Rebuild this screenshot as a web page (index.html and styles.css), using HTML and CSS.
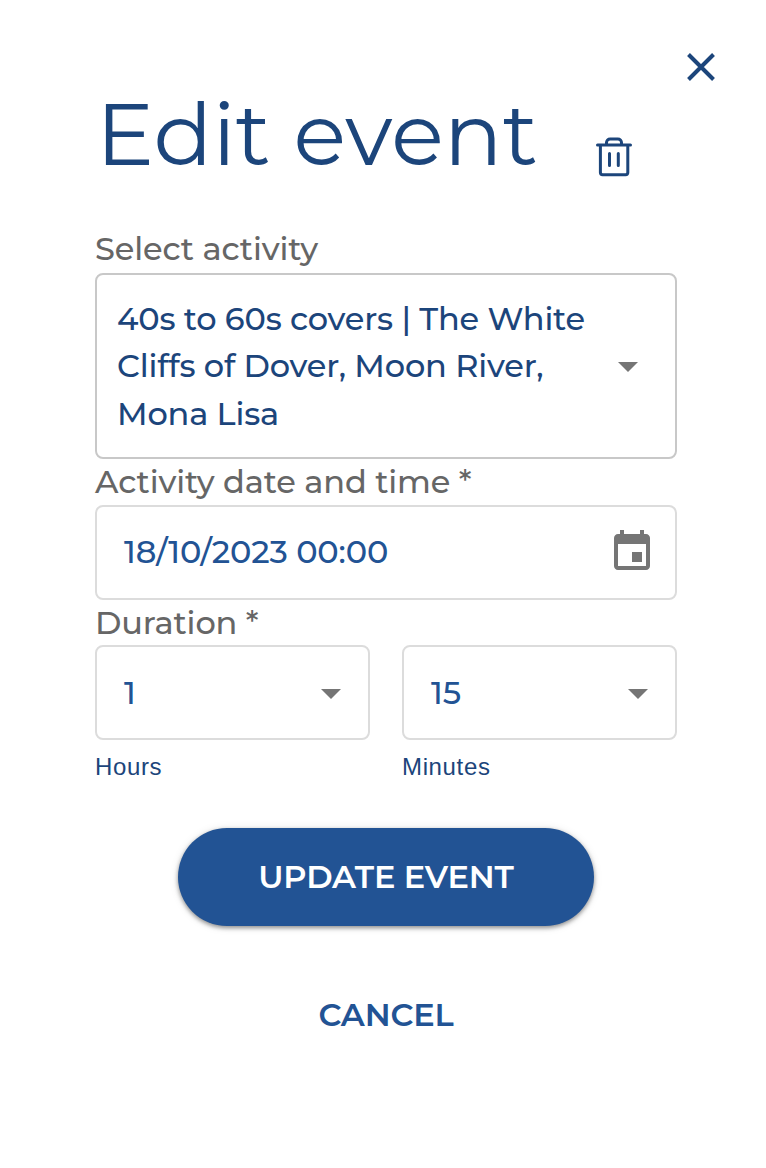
FILE: index.html
```html
<!DOCTYPE html>
<html lang="en">
<head>
<meta charset="utf-8">
<title>Edit event</title>
<link rel="stylesheet" href="styles.css">
</head>
<body>
<main class="dialog">
  <div class="topbar">
    <svg class="close" viewBox="0 0 28 28" role="img" aria-label="Close"><path d="M1.5 1.5l25 25M26.5 1.5l-25 25"/></svg>
  </div>
  <header class="heading">
    <h1 class="title">Edit event</h1>
    <svg class="trash" viewBox="0 0 36 40" role="img" aria-label="Delete"><path d="M1.5 8h33M4.400 8v27.600a2.200 2.200 0 0 0 2.200 2.200h23a2.200 2.200 0 0 0 2.200-2.200V8M10.500 7.500V5.600a3.600 3.600 0 0 1 3.600-3.600h7.800a3.600 3.600 0 0 1 3.600 3.600V7.500M13.500 16.500v12M22.300 16.500v12"/></svg>
  </header>
  <div class="label">Select activity</div>
  <div class="field activity">
    <div class="lines">40s to 60s covers | The White<br>Cliffs of Dover, Moon River,<br>Mona Lisa</div>
    <svg class="caret" viewBox="0 0 20 10"><path d="M0 0h20L10 10z"/></svg>
  </div>
  <div class="label">Activity date and time *</div>
  <div class="field date">
    <span class="value">18/10/2023 00:00</span>
    <svg class="calendar" viewBox="3 1 18 20"><path d="M17 12h-5v5h5v-5zM16 1v2H8V1H6v2H5c-1.110 0-1.990.9-1.990 2L3 19c0 1.100.89 2 2 2h14c1.100 0 2-.9 2-2V5c0-1.100-.9-2-2-2h-1V1h-2zm3 18H5V8h14v11z"/></svg>
  </div>
  <div class="label">Duration *</div>
  <div class="duration">
    <div class="part">
      <div class="field"><span class="value">1</span><svg class="caret" viewBox="0 0 20 10"><path d="M0 0h20L10 10z"/></svg></div>
      <div class="hint">Hours</div>
    </div>
    <div class="part">
      <div class="field"><span class="value">15</span><svg class="caret" viewBox="0 0 20 10"><path d="M0 0h20L10 10z"/></svg></div>
      <div class="hint">Minutes</div>
    </div>
  </div>
  <div class="actions">
    <button class="btn update">UPDATE EVENT</button>
    <button class="btn cancel">CANCEL</button>
  </div>
</main>
</body>
</html>
```
FILE: styles.css
```css
* { box-sizing: border-box; }
body { margin: 0; background: #fff; font-family: Montserrat, Inter, "Open Sans", sans-serif; color: #1c457b; }
svg { display: block; flex: none; }
.dialog { width: 766px; height: 1168px; padding: 0 89px 0 95px; overflow: hidden; }
.topbar { display: flex; justify-content: flex-end; height: 84px; padding-top: 53px; margin-right: -38px; }
.close { width: 28px; height: 28px; fill: none; stroke: #1c457b; stroke-width: 4; }
.heading { display: flex; justify-content: space-between; height: 146px; padding-right: 45px; }
.title { margin: 0 0 0 1px; font-size: 87px; line-height: 100px; font-weight: 400; letter-spacing: 0.05px; white-space: nowrap; }
.trash { width: 36px; height: 40px; margin-top: 53px; fill: none; stroke: #1c457b; stroke-width: 3; stroke-linecap: round; }
.label { font-size: 32px; line-height: 38px; font-weight: 500; letter-spacing: -0.12px; color: #666; white-space: nowrap; }
.field { display: flex; align-items: center; justify-content: space-between; height: 95px; padding: 0 27px; border: 2px solid #dcdcdc; border-radius: 8px; }
.activity { height: 186px; margin: 5px 0 4px; padding: 0 37px 0 20px; border-color: #c8c8c8; }
.activity .caret { margin-top: 2px; }
.lines { font-size: 32px; line-height: 47.5px; font-weight: 500; letter-spacing: -0.16px; white-space: nowrap; }
.date { margin: 4px 0; padding-right: 25px; padding-bottom: 2px; }
.value { font-size: 32px; line-height: 40px; font-weight: 500; color: #225394; letter-spacing: -0.12px; white-space: nowrap; }
.caret { width: 20px; height: 10px; fill: #757575; }
.calendar { width: 36px; height: 40px; margin-bottom: 3px; fill: #757575; }
.duration { display: grid; grid-template-columns: 1fr 1fr; gap: 32px; margin-top: 3px; }
.duration .field { padding-top: 1px; }
.duration .caret { margin-top: 1px; }
.hint { margin-top: 13px; font: 24px/28px "Liberation Sans", Arial, sans-serif; letter-spacing: 0.65px; }
.actions { display: flex; flex-direction: column; align-items: center; gap: 40px; margin-top: 46.5px; }
.btn { height: 98px; border: 0; padding: 0; font: 600 32px/40px Montserrat, Inter, sans-serif; letter-spacing: -0.15px; white-space: nowrap; }
.update { width: 416px; border-radius: 49px; background: #225394; color: #fff; box-shadow: 0 2px 4px rgba(0, 0, 0, .4), 0 1px 10px rgba(0, 0, 0, .1); }
.cancel { background: none; color: #225394; }
```
